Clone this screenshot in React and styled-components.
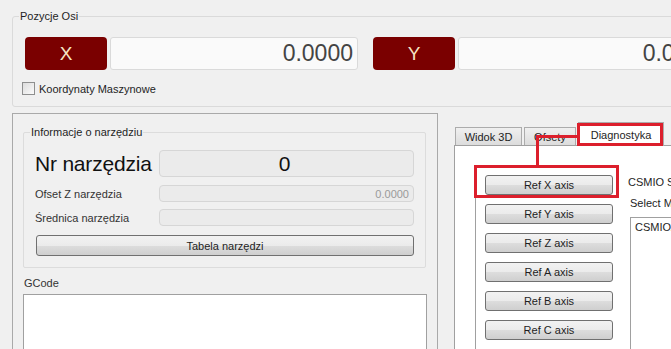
import styled, { createGlobalStyle } from 'styled-components'

const GlobalStyle = createGlobalStyle`
	body {
		margin: 0;
		background: #f0f0f0;
		font-family: 'Liberation Sans', Tahoma, sans-serif;
		font-size: 11px;
		color: #1e1e1e;
		overflow: hidden;
	}
`

const App = () => {
	return (
		<Screen>
			<GlobalStyle />
			<AxisGroup>
				<GroupTitle>Pozycje Osi</GroupTitle>
				<AxisRow>
					<AxisLabel>X</AxisLabel>
					<AxisValue $w={248}>0.0000</AxisValue>
					<AxisLabel $gap>Y</AxisLabel>
					<AxisValue $w={260}>0.0000</AxisValue>
				</AxisRow>
				<CheckRow>
					<CheckBox />
					<span>Koordynaty Maszynowe</span>
				</CheckRow>
			</AxisGroup>

			<Lower>
				<LeftPanel>
					<InfoGroup>
						<GroupTitle $left={7}>Informacje o narzędziu</GroupTitle>
						<InfoRow $top={11} $h={27}>
							<BigLabel>Nr narzędzia</BigLabel>
							<Field $big>0</Field>
						</InfoRow>
						<InfoRow $top={8} $h={17}>
							<SmallLabel>Ofset Z narzędzia</SmallLabel>
							<Field>0.0000</Field>
						</InfoRow>
						<InfoRow $top={7} $h={17}>
							<SmallLabel>Średnica narzędzia</SmallLabel>
							<Field />
						</InfoRow>
						<WideButton>Tabela narzędzi</WideButton>
					</InfoGroup>
					<GCodeLabel>GCode</GCodeLabel>
					<GCodeBox />
				</LeftPanel>

				<RightPanel>
					<TabBar>
						<Tab $w={67}>Widok 3D</Tab>
						<Tab $w={52}>Ofsety</Tab>
						<Tab $w={86} $active>Diagnostyka</Tab>
					</TabBar>
					<TabPane>
						<RefColumn>
							{['X', 'Y', 'Z', 'A', 'B', 'C'].map((axis) => (
								<RefButton key={axis}>Ref {axis} axis</RefButton>
							))}
						</RefColumn>
						<InfoColumn>
							<StatusText>CSMIO Status</StatusText>
							<StatusText $indent>Select Module:</StatusText>
							<ModuleList>
								<div>CSMIO/IP-S</div>
							</ModuleList>
						</InfoColumn>
					</TabPane>

					{/* red annotation drawn over the screenshot */}
					<Marker $l={123} $t={10} $w={86} $h={23} />
					<Line $l={82} $t={22} $w={43} $h={3} />
					<Line $l={82} $t={22} $w={3} $h={32} />
					<Marker $l={20} $t={52} $w={145} $h={33} />
				</RightPanel>
			</Lower>
		</Screen>
	)
}

const Screen = styled.div`
	width: 671px;
	height: 349px;
	overflow: hidden;
	padding-top: 16px;
	box-sizing: border-box;
`

const AxisGroup = styled.div`
	margin-left: 12px;
	width: 720px;
	border: 1px solid #dadada;
	border-radius: 3px;
	padding: 0 0 11px 12px;
`

const GroupTitle = styled.div`
	width: fit-content;
	margin: -7px 0 0 ${(p) => (p.$left ?? 6) - 12}px;
	padding: 0 1px;
	line-height: 13px;
	background: #f0f0f0;
	color: #1e1e1e;
`

const AxisRow = styled.div`
	display: flex;
	margin-top: 14px;
	height: 33px;
`

const AxisLabel = styled.div`
	width: 82px;
	margin-left: ${(p) => (p.$gap ? 15 : 0)}px;
	display: flex;
	align-items: center;
	justify-content: center;
	background: #7a0000;
	color: #f6e4c4;
	font-size: 19px;
	border-radius: 4px;
`

const AxisValue = styled.div`
	width: ${(p) => p.$w}px;
	margin-left: 3px;
	box-sizing: border-box;
	display: flex;
	align-items: center;
	justify-content: flex-end;
	padding-right: 4px;
	background: #fafafa;
	border: 1px solid #dadada;
	border-radius: 3px;
	font-size: 23px;
	color: #444;
`

const CheckRow = styled.div`
	display: flex;
	align-items: center;
	gap: 4px;
	height: 13px;
	margin: 12px 0 0 -3px;
`

const CheckBox = styled.div`
	width: 13px;
	height: 13px;
	box-sizing: border-box;
	border: 1px solid #8e8f8f;
	background: linear-gradient(135deg, #dcdcdc, #fbfbfb);
`

const Lower = styled.div`
	display: flex;
	align-items: flex-start;
	margin-top: 6px;
`

const LeftPanel = styled.div`
	margin-left: 12px;
	width: 426px;
	height: 240px;
	box-sizing: border-box;
	border: 1px solid #a9a9a9;
	border-bottom: none;
	padding: 18px 11px 0 10px;
	flex-shrink: 0;
`

const InfoGroup = styled.div`
	border: 1px solid #dcdcdc;
	border-radius: 2px;
	padding: 0 11px 11px 11px;
`

const InfoRow = styled.div`
	display: grid;
	grid-template-columns: 124px 1fr;
	align-items: center;
	margin-top: ${(p) => p.$top}px;
	height: ${(p) => p.$h}px;
`

const BigLabel = styled.div`
	font-size: 21px;
	letter-spacing: -0.2px;
	color: #111;
	white-space: nowrap;
`

const SmallLabel = styled.div`
	color: #333;
`

const Field = styled.div`
	height: 100%;
	box-sizing: border-box;
	display: flex;
	align-items: center;
	justify-content: ${(p) => (p.$big ? 'center' : 'flex-end')};
	padding-right: 4px;
	background: #ebebeb;
	border: 1px solid #d6d6d6;
	border-radius: 4px;
	font-size: ${(p) => (p.$big ? 21 : 11)}px;
	color: ${(p) => (p.$big ? '#111' : '#9a9a9a')};
`

const buttonLook = `
	box-sizing: border-box;
	display: flex;
	align-items: center;
	justify-content: center;
	height: 21px;
	border: 1px solid #707070;
	border-radius: 3px;
	background: linear-gradient(#f2f2f2 0%, #ebebeb 50%, #dddddd 51%, #cfcfcf 100%);
	color: #1e1e1e;
`

const WideButton = styled.div`
	${buttonLook}
	margin: 9px 0 0 1px;
`

const GCodeLabel = styled.div`
	margin: 9px 0 0 1px;
	line-height: 13px;
	color: #333;
`

const GCodeBox = styled.div`
	margin: 4px -1px 0 0;
	height: 80px;
	background: #fff;
	border: 1px solid #a0a0a0;
`

const RightPanel = styled.div`
	position: relative;
	margin-left: 16px;
	width: 260px;
	flex-shrink: 0;
`

const TabBar = styled.div`
	display: flex;
	align-items: flex-end;
	gap: 1px;
	height: 23px;
	margin-top: 9px;
	padding-left: 1px;
	position: relative;
	z-index: 1;
`

const Tab = styled.div`
	width: ${(p) => p.$w}px;
	height: ${(p) => (p.$active ? 24 : 18)}px;
	margin-bottom: ${(p) => (p.$active ? -1 : 0)}px;
	margin-right: ${(p) => (p.$active ? 0 : 1)}px;
	box-sizing: border-box;
	display: flex;
	align-items: center;
	justify-content: center;
	border: 1px solid #acacac;
	border-bottom: none;
	background: ${(p) => (p.$active ? '#fff' : 'linear-gradient(#f0f0f0, #dcdcdc)')};
	color: #1e1e1e;
`

const TabPane = styled.div`
	display: flex;
	height: 220px;
	background: #fff;
	border: 1px solid #a0a0a0;
	padding: 20px 0 0 20px;
`

const RefColumn = styled.div`
	width: 145px;
	flex-shrink: 0;
	display: flex;
	flex-direction: column;
	gap: 9px;
	border-left: 1px solid #a0a0a0;
	padding: 9px 0 0 9px;
	box-sizing: border-box;
`

const RefButton = styled.div`
	${buttonLook}
	width: 128px;
	height: 20px;
`

const InfoColumn = styled.div`
	margin-left: 8px;
	padding-top: 10px;
	white-space: nowrap;
`

const StatusText = styled.div`
	line-height: 13px;
	margin: ${(p) => (p.$indent ? '8px 0 0 2px' : '0')};
`

const ModuleList = styled.div`
	margin: 7px 0 0 2px;
	width: 120px;
	height: 140px;
	border: 1px solid #a0a0a0;
	padding: 3px 4px;
`

const Marker = styled.div`
	position: absolute;
	left: ${(p) => p.$l}px;
	top: ${(p) => p.$t}px;
	width: ${(p) => p.$w}px;
	height: ${(p) => p.$h}px;
	box-sizing: border-box;
	border: 3px solid #dc1f2c;
	z-index: 2;
`

const Line = styled.div`
	position: absolute;
	left: ${(p) => p.$l}px;
	top: ${(p) => p.$t}px;
	width: ${(p) => p.$w}px;
	height: ${(p) => p.$h}px;
	background: #dc1f2c;
	z-index: 2;
`

export default App
